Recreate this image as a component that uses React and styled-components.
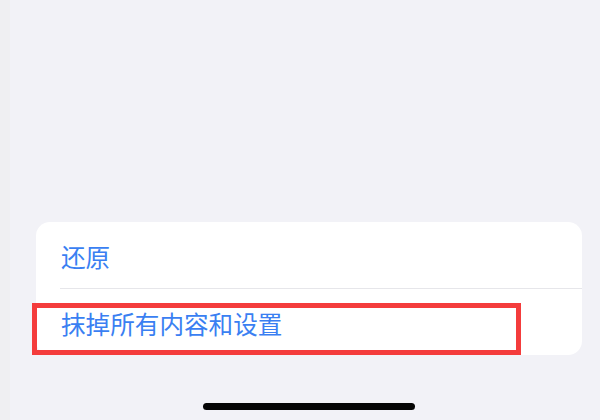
import styled, { createGlobalStyle } from "styled-components";

const GlobalStyle = createGlobalStyle`
  html, body {
    margin: 0;
    padding: 0;
    background: #f2f2f7;
  }
  #root {
    width: 600px;
    height: 420px;
    overflow: hidden;
  }
`;

const Screen = styled.div`
  width: 600px;
  height: 420px;
  display: flex;
  background: #f2f2f7;
  font-family: "Noto Sans CJK SC", "Noto Sans", sans-serif;
`;

const Bezel = styled.div`
  width: 10px;
  flex-shrink: 0;
  background: #efeff2;
`;

const Content = styled.div`
  flex: 1;
  display: flex;
  flex-direction: column;
  padding-top: 222px;
`;

const Group = styled.div`
  position: relative;
  margin-left: 26px;
  width: 546px;
  background: #ffffff;
  border-radius: 14px;
`;

const Row = styled.div`
  display: flex;
  align-items: center;
  padding-top: 3px;
  box-sizing: border-box;
  font-size: 24.6px;
  line-height: 1;
  color: #3a7ff2;
  border-bottom: ${(p) => (p.$last ? "none" : "1px solid #e6e6ea")};
  margin-left: ${(p) => (p.$last ? "0" : "24px")};
  padding-left: ${(p) => (p.$last ? "25px" : "1px")};
  height: ${(p) => (p.$last ? "66px" : "67px")};
`;

const Highlight = styled.div`
  position: absolute;
  left: -4px;
  top: 81px;
  width: 489px;
  height: 52px;
  border: 5px solid #f43c3c;
  box-sizing: border-box;
  pointer-events: none;
`;

const HomeIndicator = styled.div`
  margin: 48px 0 0 193px;
  width: 212px;
  height: 7px;
  border-radius: 4px;
  background: #050505;
`;

export default function App() {
  return (
    <>
      <GlobalStyle />
      <Screen>
        <Bezel />
        <Content>
          <Group>
            <Row>还原</Row>
            <Row $last>抹掉所有内容和设置</Row>
            <Highlight />
          </Group>
          <HomeIndicator />
        </Content>
      </Screen>
    </>
  );
}
